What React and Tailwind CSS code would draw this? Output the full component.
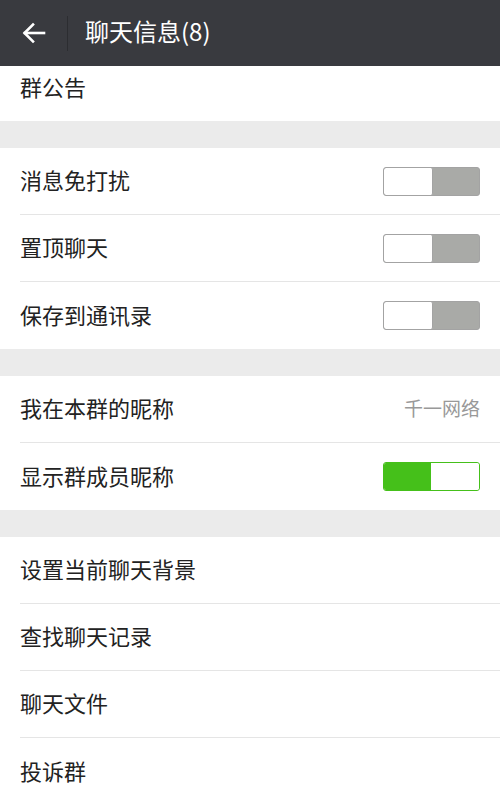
const font = { fontFamily: '"Noto Sans CJK SC", Roboto, "Liberation Sans", sans-serif' }

function Toggle({ on }) {
  return on ? (
    <div className="flex h-[29px] w-[97px] overflow-hidden rounded-[3px] border border-[#45c01a]">
      <div className="flex-1 bg-[#45c01a]" />
      <div className="w-[48px] rounded-[2px] bg-white" />
    </div>
  ) : (
    <div className="flex h-[29px] w-[97px] overflow-hidden rounded-[3px] border border-[#a3a3a3] bg-[#a9aaa7]">
      <div className="w-[49px] rounded-[2px] border-r border-[#a3a3a3] bg-white" />
      <div className="flex-1" />
    </div>
  )
}

function Row({ label, right, last }) {
  return (
    <div className="pl-5">
      <div className={`flex h-[67px] items-center justify-between pr-5 ${last ? '' : 'border-b border-[#e5e5e5]'}`}>
        <span className="mb-[4px] text-[22px] leading-[30px] text-[#222]">{label}</span>
        {right}
      </div>
    </div>
  )
}

function Gap() {
  return <div className="h-[27px] bg-[#ebebeb]" />
}

export default function App() {
  return (
    <div className="h-[792px] w-[500px] overflow-hidden bg-white" style={font}>
      {/* header */}
      <div className="flex h-[66px] items-center bg-[#393a3f]">
        <div className="flex w-[67px] items-center pl-[22px]">
          <svg width="24" height="22" viewBox="0 0 24 22" fill="none" stroke="white" strokeWidth="2.6" strokeLinecap="square">
            <path d="M22 11H3" />
            <path d="M11 2.5 2.5 11l8.5 8.5" />
          </svg>
        </div>
        <div className="h-[35px] w-px bg-[#2c2d31]" />
        <span className="mb-[4px] ml-[17px] text-[24px] leading-[32px] text-white">聊天信息(8)</span>
      </div>

      <div className="flex h-[55px] items-center pb-[15px] pl-5">
        <span className="text-[22px] leading-[30px] text-[#222]">群公告</span>
      </div>
      <Gap />

      <Row label="消息免打扰" right={<Toggle />} />
      <Row label="置顶聊天" right={<Toggle />} />
      <Row label="保存到通讯录" right={<Toggle />} last />
      <Gap />

      <Row label="我在本群的昵称" right={<span className="mb-[2px] text-[19px] text-[#999]">千一网络</span>} />
      <Row label="显示群成员昵称" right={<Toggle on />} last />
      <Gap />

      <Row label="设置当前聊天背景" />
      <Row label="查找聊天记录" />
      <Row label="聊天文件" />
      <Row label="投诉群" last />
    </div>
  )
}
